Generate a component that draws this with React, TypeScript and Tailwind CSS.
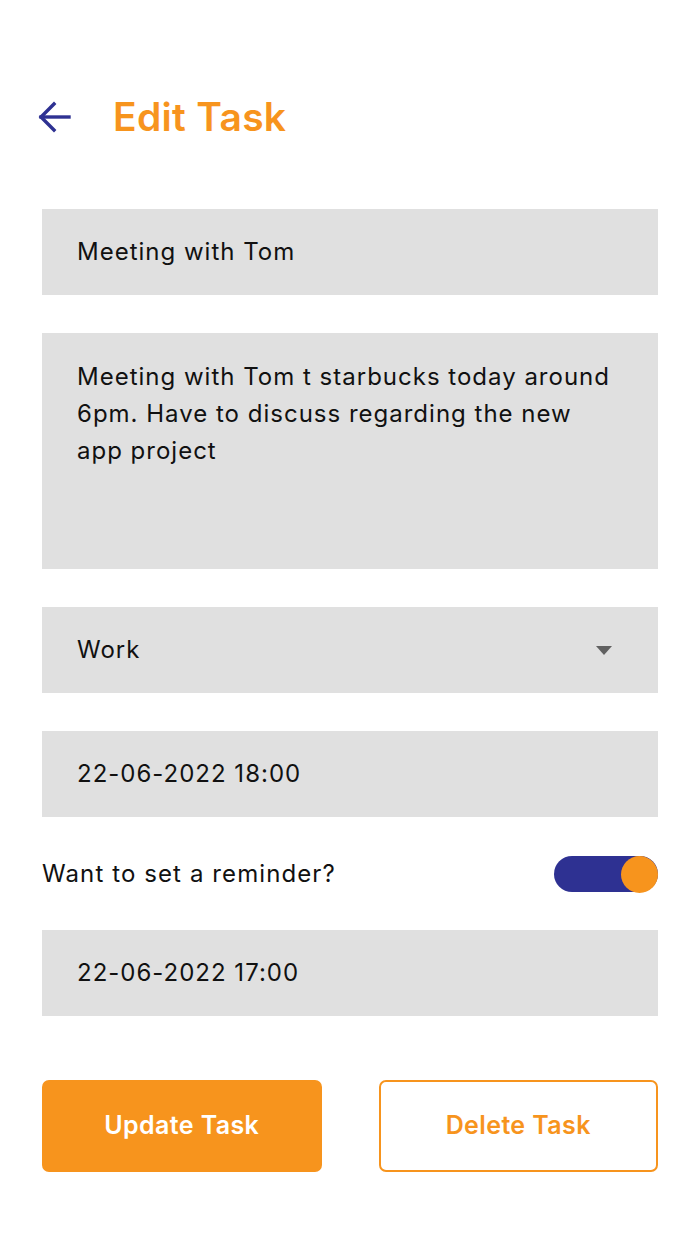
import { useState } from 'react';

const font = { fontFamily: 'Inter, "Noto Sans", sans-serif' };

export default function App() {
  const [reminder, setReminder] = useState(true);

  return (
    <div className="min-h-[1244px] w-full bg-white text-[#111111]" style={font}>
      <div className="flex flex-col px-[42px]">
        <div className="flex h-[209px] items-center gap-[42px] pt-[25px]">
          <button type="button" aria-label="Back" className="-ml-[5px] flex h-[34px] w-[34px] items-center justify-center">
            <svg viewBox="0 0 34 34" className="h-[34px] w-[34px]" fill="none" stroke="#2e3192" strokeWidth="3.4" strokeLinecap="square">
              <path d="M32 17H4" />
              <path d="M17 4L4 17l13 13" />
            </svg>
          </button>
          <h1 className="text-[39px] font-semibold tracking-[0.3px] text-[#f7941d]">Edit Task</h1>
        </div>

        <div className="flex h-[86px] items-center bg-[#e0e0e0] px-[35px] text-[24px] tracking-[1px]">
          Meeting with Tom
        </div>

        <div className="mt-[38px] h-[236px] bg-[#e0e0e0] pl-[35px] pr-[38px] pt-[25px] text-[24px] leading-[37px] tracking-[1px]">
          Meeting with Tom t starbucks today around 6pm. Have to discuss regarding the new app project
        </div>

        <div className="mt-[38px] flex h-[86px] items-center justify-between bg-[#e0e0e0] pl-[35px] pr-[46px] text-[24px] tracking-[1px]">
          <span>Work</span>
          <svg viewBox="0 0 16 9" className="h-[9px] w-[16px]">
            <path d="M0 0h16L8 9z" fill="#616161" />
          </svg>
        </div>

        <div className="mt-[38px] flex h-[86px] items-center bg-[#e0e0e0] px-[35px] text-[24px] tracking-[1px]">
          22-06-2022 18:00
        </div>

        <div className="mt-[39px] flex h-[36px] items-center justify-between">
          <span className="text-[24px] tracking-[1.1px]">Want to set a reminder?</span>
          <button
            type="button"
            aria-label="Toggle reminder"
            onClick={() => setReminder((v) => !v)}
            className="flex h-[36px] w-[104px] items-center justify-end rounded-full bg-[#2e3192]"
          >
            <span className="h-[37px] w-[37px] rounded-full bg-[#f7941d]" />
          </button>
        </div>

        {reminder ? (
          <div className="mt-[38px] flex h-[86px] items-center bg-[#e0e0e0] px-[35px] text-[24px] tracking-[1px]">
            22-06-2022 17:00
          </div>
        ) : null}

        <div className="mt-[64px] grid grid-cols-2 gap-[57px]">
          <button
            type="button"
            className="h-[92px] rounded-[7px] bg-[#f7941d] text-[25px] font-semibold tracking-[0.4px] text-white"
          >
            Update Task
          </button>
          <button
            type="button"
            className="h-[92px] rounded-[7px] border-2 border-[#f7941d] bg-white text-[25px] font-semibold tracking-[0.4px] text-[#f7941d]"
          >
            Delete Task
          </button>
        </div>
      </div>
    </div>
  );
}
